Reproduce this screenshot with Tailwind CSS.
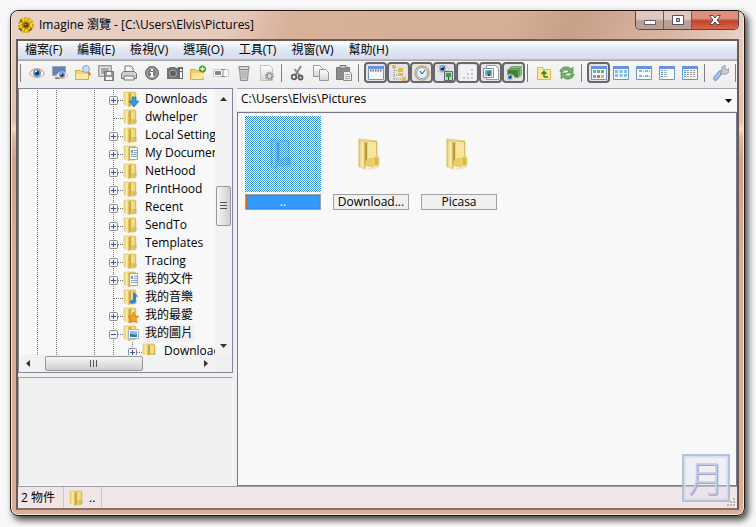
<!DOCTYPE html>
<html lang="zh-Hant">
  <head>
    <meta charset="UTF-8" />
    <meta name="viewport" content="width=device-width, initial-scale=1.0" />
    <title>Imagine 瀏覽</title>
    <!-- Tailwind CDN -->
    <script src="https://cdn.jsdelivr.net/npm/@tailwindcss/browser@4"></script>
  </head>
  <body class="flex h-screen flex-col overflow-hidden bg-[#f8f8f8] pt-[10px] pr-[11px] pb-[11px] pl-[10px] font-['Open_Sans','Noto_Sans_CJK_TC',sans-serif] text-xs text-black">
    <!-- Shared icons -->
    <svg class="absolute size-0">
      <defs>
        <linearGradient id="gold" x1="0" x2="1">
          <stop offset="0" stop-color="#f6e7a0" />
          <stop offset="0.5" stop-color="#ecd478" />
          <stop offset="1" stop-color="#dcb23c" />
        </linearGradient>
        <linearGradient id="flap" x1="0" x2="1">
          <stop offset="0" stop-color="#e6c866" />
          <stop offset="0.6" stop-color="#fbf2bc" />
          <stop offset="1" stop-color="#d8b34c" />
        </linearGradient>
        <linearGradient id="page" x2="0" y2="1">
          <stop offset="0" stop-color="#fff" />
          <stop offset="1" stop-color="#d4d4d4" />
        </linearGradient>
      </defs>
      <symbol id="folder" viewBox="0 0 16 16">
        <path d="M1 1h11l1 1v12l-1 1H5L1 13z" fill="url(#gold)" stroke="#dfc36a" stroke-width=".6" />
        <path d="M1 1l5 1.500V16L1 14z" fill="url(#flap)" />
        <path d="M6 2.500L8 1v13l-2 2z" fill="#cfa93c" />
        <path d="M8 2h4v8H8z" fill="#f0dc86" />
        <path d="M12 10h1.500v4H12z" fill="#9ec3dc" />
      </symbol>
      <symbol id="folder-open" viewBox="0 0 24 32">
        <path d="M16 27l8 1-6 3-9 1z" fill="#e4e4e2" />
        <path d="M2 1l18 2v25H8L2 29z" fill="url(#gold)" stroke="#e4cc7c" stroke-width=".8" />
        <path d="M11 4h8v16h-8z" fill="#f6e6a2" />
        <path d="M8 5l2-1v18l-2 6z" fill="#b98f2c" />
        <path d="M2 1l6 4v26l-6-3z" fill="url(#flap)" stroke="#dcc06a" stroke-width=".8" />
        <path d="M9 22c3 0 5-1 7-3l6 1v7c-5 2-9 2-14 1z" fill="#e9cc66" />
        <path d="M17 19h5v8l-5 1z" fill="#dfb93c" stroke="#efdc91" />
      </symbol>
      <symbol id="eye" viewBox="0 0 16 16">
        <path d="M.5 8.500C4 2 12 2 15.500 8.500 12 14 4 14 .5 8.500z" fill="#fbf3ee" stroke="#dcae90" stroke-width="1.200" />
        <circle cx="8" cy="8" r="4" fill="#5c94d0" />
        <circle cx="8" cy="8" r="2" fill="#10284c" />
        <circle cx="7" cy="6.500" r="1" fill="#fff" />
      </symbol>
      <symbol id="win" viewBox="0 0 16 16">
        <path d="M.5 1.500h15v13H.5z" fill="#f6f8fb" stroke="#7392c8" />
        <path d="M0 1h16v3H0z" fill="#6a94da" />
      </symbol>
    </svg>

    <div class="flex min-h-0 flex-1 flex-col rounded-lg border border-[#241812] bg-[linear-gradient(#e6cfc4_0,#dfc0b0_110px,#f0dcb8_118px,#dbb9a5_126px,#d0a38a_150px,#d9af98_260px,#d9af98_100%)] px-[5px] pb-[5px] shadow-[3px_4px_7px_rgba(0,0,0,0.75)] inset-ring inset-ring-[#f7e5db]">
      <!-- Title bar -->
      <header class="-mx-1 flex h-7 shrink-0 items-start justify-between rounded-t-md bg-[linear-gradient(115deg,#e9d2c7_0%,#e6cabc_30%,#d8b199_38%,#d6ad95_68%,#c89f87_76%,#d2ab95_83%,#d9b5a2_90%,#e7d0c5_100%)] pr-1 pl-[6px]">
        <h1 class="flex h-full items-center gap-[5px]">
          <svg class="size-4" viewBox="0 0 16 16">
            <circle cx="8" cy="8" r="6.500" fill="none" stroke="#dba800" stroke-width="3" stroke-dasharray="2.500 1" />
            <circle cx="8" cy="8" r="5.500" fill="#c48c00" />
            <circle cx="8" cy="8" r="5" fill="none" stroke="#f4d820" stroke-width="2" stroke-dasharray="2 1.200" />
            <circle cx="8" cy="8" r="2.500" fill="#5a3c08" />
            <circle cx="7.500" cy="7.500" r="1" fill="#a8b030" />
            <path d="M1 11l3 3M11 14l3-3M2 3l2 2" stroke="#6c5410" stroke-width="1.500" />
          </svg>
          Imagine 瀏覽 - [C:\Users\Elvis\Pictures]
        </h1>
        <div class="flex h-[19px] overflow-hidden rounded-b-[5px] border border-t-0 border-[#584840]">
          <button aria-label="最小化" class="flex w-7 items-center justify-center border-r border-[#705c54] bg-linear-to-b from-[#dcc9c0] from-45% to-[#b9a096] to-55%">
            <svg class="mt-1 h-[6px] w-3" viewBox="0 0 12 6"><path d="M.5 1.500h11v4H.5z" fill="#fff" stroke="#625e68" /></svg>
          </button>
          <button aria-label="最大化" class="flex w-7 items-center justify-center border-r border-[#705c54] bg-linear-to-b from-[#dcc9c0] from-45% to-[#b9a096] to-55%">
            <svg class="h-[10px] w-3" viewBox="0 0 12 10"><path d="M.5.5h11v9H.5zM4.500 3.500v3h3v-3z" fill="#fff" fill-rule="evenodd" stroke="#55525c" /></svg>
          </button>
          <button aria-label="關閉" class="flex w-[46px] items-center justify-center bg-linear-to-b from-[#dd9080] from-40% via-[#c2402a] via-55% to-[#d8684a]">
            <svg class="h-[10px] w-3" viewBox="0 0 12 10"><path d="M.5.5h3.500L6 3 8 .5h3.500L8 5l3.500 4.500H8L6 7 4 9.500H.5L4 5z" fill="#fff" stroke="#5c4850" /></svg>
          </button>
        </div>
      </header>

      <div class="flex min-h-0 flex-1 flex-col border-2 border-[#6b5b55] border-b-[#8a7068] bg-[#f0f0f0]">
        <!-- Menu -->
        <nav class="flex h-[19px] shrink-0 items-center gap-[15px] border-b border-[#b4bac8] bg-linear-to-b from-white via-[#e2e9f2] via-45% to-[#d6dcee] px-[7px] whitespace-nowrap">
          <button>檔案(F)</button>
          <button>編輯(E)</button>
          <button>檢視(V)</button>
          <button>選項(O)</button>
          <button>工具(T)</button>
          <button>視窗(W)</button>
          <button>幫助(H)</button>
        </nav>

        <!-- Toolbar, filled by the script below -->
        <div id="toolbar" role="toolbar" class="flex h-[28px] shrink-0 items-center overflow-hidden border-t border-[#a8a8a8] bg-linear-to-b from-[#f6f6f6] to-[#ededed] pb-1"></div>

        <main class="flex min-h-0 flex-1 gap-1">
          <div class="flex w-[215px] shrink-0 flex-col gap-1">
            <!-- Folder tree -->
            <section class="grid h-[285px] shrink-0 grid-cols-[1fr_17px] grid-rows-[1fr_17px] border border-[#85859a] bg-[#f8f8f8]">
              <ul id="tree" class="min-h-0 overflow-hidden pt-px whitespace-nowrap"></ul>
              <div class="flex min-h-0 flex-col items-center bg-[#f2f2f2]">
                <svg class="mt-2 h-1 w-[7px]" viewBox="0 0 7 4"><path d="M0 4h7L3.500 0z" fill="#333" /></svg>
                <div class="mt-[85px] flex h-10 w-[15px] items-center justify-center rounded-xs border border-[#989898] bg-linear-to-r from-[#f6f6f6] to-[#cfcfcf]">
                  <svg class="h-2 w-[7px]" viewBox="0 0 7 8"><path d="M0 .5h7M0 3.500h7M0 6.500h7" stroke="#555" /></svg>
                </div>
                <svg class="mt-auto mb-[7px] h-1 w-[7px]" viewBox="0 0 7 4"><path d="M0 0h7L3.500 4z" fill="#333" /></svg>
              </div>
              <div class="flex items-center bg-[#f2f2f2] pb-px pl-[7px]">
                <svg class="h-[7px] w-1" viewBox="0 0 4 7"><path d="M4 0v7L0 3.500z" fill="#333" /></svg>
                <div class="ml-[15px] flex h-[15px] w-[98px] items-center justify-center rounded-xs border border-[#989898] bg-linear-to-b from-[#f6f6f6] to-[#cfcfcf]">
                  <svg class="h-[7px] w-2" viewBox="0 0 8 7"><path d="M.5 0v7M3.500 0v7M6.500 0v7" stroke="#555" /></svg>
                </div>
                <svg class="mr-[7px] ml-auto h-[7px] w-1" viewBox="0 0 4 7"><path d="M0 0v7l4-3.500z" fill="#333" /></svg>
              </div>
              <div class="bg-[#f0f0f0]"></div>
            </section>
            <!-- Preview -->
            <section class="flex-1 border border-t-[#a0a0a0] border-r-[#f8f8f8] border-b-[#f8f8f8] border-l-[#a0a0a0]"></section>
          </div>

          <div class="flex min-w-0 flex-1 flex-col">
            <div class="relative h-6 shrink-0 border-t border-b border-t-[#a4a4b4] border-b-[#e4e4e8] bg-[#f8f8f8]">
              <select aria-label="路徑" class="h-full w-full appearance-none bg-transparent px-1 pb-[2px]">
                <option>C:\Users\Elvis\Pictures</option>
              </select>
              <svg class="pointer-events-none absolute top-[10px] right-[5px] h-1 w-[7px]" viewBox="0 0 7 4"><path d="M0 0h7L3.500 4z" /></svg>
            </div>
            <ul class="flex flex-1 flex-wrap content-start gap-3 border border-[#78788a] bg-[#f8f8f8] px-[7px] py-[3px]">
              <li class="flex w-[76px] flex-col gap-[2px]">
                <div class="relative flex h-[76px] items-center justify-center">
                  <svg class="mr-1 h-8 w-6"><use href="#folder-open" /></svg>
                  <!-- dithered selection -->
                  <div class="absolute inset-0 bg-[conic-gradient(#3a8ee0_25%,transparent_0_50%,#3a8ee0_0_75%,transparent_0)] bg-size-[2px_2px]"></div>
                </div>
                <span class="h-4 border border-[#a0a0a0] bg-[#3399ff] text-center leading-[14px] text-white outline-1 -outline-offset-2 outline-dotted outline-[#c86414]">..</span>
              </li>
              <li class="flex w-[76px] flex-col gap-[2px]">
                <div class="flex h-[76px] items-center justify-center"><svg class="mr-1 h-8 w-6"><use href="#folder-open" /></svg></div>
                <span class="h-4 border border-[#a0a0a0] bg-[#f0f0f0] text-center leading-[14px]">Download...</span>
              </li>
              <li class="flex w-[76px] flex-col gap-[2px]">
                <div class="flex h-[76px] items-center justify-center"><svg class="mr-1 h-8 w-6"><use href="#folder-open" /></svg></div>
                <span class="h-4 border border-[#a0a0a0] bg-[#f0f0f0] text-center leading-[14px]">Picasa</span>
              </li>
            </ul>
          </div>
        </main>

        <!-- Status bar -->
        <footer class="relative flex h-[22px] shrink-0 items-center border-t border-[#a09ca0] bg-[#f0e6e6]">
          <span class="flex h-full w-[46px] items-center border-r border-[#cdc6c6] pl-[3px]">2 物件</span>
          <span class="flex h-full w-[38px] items-center gap-1 border-r border-[#cdc6c6] pl-[5px]">
            <svg class="size-4"><use href="#folder" /></svg>..
          </span>
          <svg class="mt-auto ml-auto size-3" viewBox="0 0 12 12"><path d="M8 2h2v2H8zM5 5h2v2H5zM8 5h2v2H8zM2 8h2v2H2zM5 8h2v2H5zM8 8h2v2H8z" fill="#bcb4b6" /></svg>
          <div class="absolute right-[7px] bottom-[6px] flex size-12 items-center justify-center border-2 border-[#aab4d6]/80 bg-[#dfe4f2]/40 pb-1 font-['Noto_Sans_CJK_TC',sans-serif] text-4xl font-light text-[#c9c9ea] inset-ring-2 inset-ring-[#d0daea]/70 text-shadow-[1px_1px_0_#a4a4bc]">月</div>
        </footer>
      </div>
    </div>

    <script>
      const icons = {
        eye: `<use href="#eye" />`,
        screen: `<path d="M.5 1.500h13v9H.5z" fill="#5a86c4" stroke="#a0a4ac" /><path d="M3 13h6" stroke="#888" stroke-width="2" /><svg x="4" y="4" width="12" height="12"><use href="#eye" /></svg>`,
        browse: `<path d="M.5 5.500h5l1 1h7v8H.5z" fill="#f6d468" stroke="#dca848" /><path d="M1 9h12v5H1z" fill="#fbe9a4" /><circle cx="11" cy="4" r="3.500" fill="#c4e2f6" stroke="#86a8c8" /><path d="M13 7l2.500 3" stroke="#c88430" stroke-width="2" />`,
        save: `<path d="M.5.5h13v11H.5z" fill="#c4c4c4" stroke="#999" /><path d="M2.500 2.500h9v7h-9z" fill="#a8a8a8" stroke="#e4e4e4" /><path d="M6.500 6.500h9v9h-9z" fill="#969696" stroke="#777" /><path d="M9 7h4v3H9zM8 12h6v3H8z" fill="#f4f4f4" />`,
        print: `<path d="M4 7V1h6l2 2v4" fill="#f4f4f4" stroke="#777" /><path d="M.5 8.500l2-2h11l2 2v5H.5z" fill="#d0d0d0" stroke="#777" /><path d="M3 11h10v4H3z" fill="#f0f0f0" stroke="#777" />`,
        info: `<circle cx="8" cy="8" r="6.500" fill="#808080" stroke="#6a6a6a" /><circle cx="8" cy="8" r="5" fill="none" stroke="#b0b0b0" /><path d="M7 4h2v2H7zM6 7h3v4h1v1H6v-1h1V8H6z" fill="#fff" />`,
        camera: `<path d="M0 3h2l1-1h5l1 1h2v11H0z" fill="#747474" /><circle cx="6" cy="8.500" r="3.500" fill="#606060" stroke="#a8a8a8" /><path d="M11 2h5v12h-5z" fill="#6a6a6a" /><path d="M13 4h2v2h-2zM13 7h2v6h-2z" fill="#fff" />`,
        addfolder: `<path d="M.5 4.500h5l1 1h7v9H.5z" fill="#f3cf65" stroke="#dcaa40" /><path d="M3 8h12l-2 6H1z" fill="#fbe898" /><circle cx="12.500" cy="4" r="3.500" fill="#43a32c" /><path d="M12.500 2v4M10.500 4h4" stroke="#fff" stroke-width="1.300" />`,
        rename: `<path d="M.5 4.500h15v7H.5z" fill="#fafafa" stroke="#ccc" /><path d="M2 6h6v4H2z" fill="#888" /><path d="M8 4.500h4M8 11.500h4M10 5v6" stroke="#8a8a8a" />`,
        trash: `<path d="M3.500 3.500h9l-1 12h-7z" fill="#cdcdcd" stroke="#8c8c8c" /><path d="M3 1.500h10v3H3z" fill="#d8d8d8" stroke="#858585" /><path d="M6 6v8M8 6v8M10 6v8" stroke="#aaa" />`,
        prefs: `<path d="M1.500.5h9l3 3v12h-12z" fill="url(#page)" stroke="#c2c2c2" /><circle cx="10.500" cy="11" r="3.500" fill="#ccc" stroke="#999" stroke-width="2" stroke-dasharray="1.600 1.100" /><circle cx="10.500" cy="11" r="2.500" fill="#ddd" stroke="#888" />`,
        cut: `<path d="M11 1L5.500 10M4.500 4l5.500 7" stroke="#8a8a8a" stroke-width="2" /><circle cx="4" cy="12" r="2.300" stroke="#5c5c5c" stroke-width="1.800" /><circle cx="10.500" cy="12.500" r="2" stroke="#5c5c5c" stroke-width="1.800" />`,
        copy: `<path d="M.5.5h6l3 3v8h-9z" fill="url(#page)" stroke="#999" /><path d="M6.500 4.500h6l3 3v8h-9z" fill="url(#page)" stroke="#999" />`,
        paste: `<path d="M.5 2.500h13v12H.5z" fill="#8c8c8c" stroke="#777" /><path d="M4 .5h6v3H4z" fill="#c4c4c4" stroke="#777" /><path d="M7.500 6.500h6l2 2v7h-8z" fill="#eee" stroke="#888" /><path d="M9 9.500h5M9 11.500h5M9 13.500h5" stroke="#aaa" />`,
        toolbars: `<use href="#win" /><path d="M2 5.500h12" stroke="#667" stroke-width="2" stroke-dasharray="1.500 1" />`,
        tree: `<path d="M3 1v13M3 5.500h5M3 10h5M3 14h8" stroke="#888" stroke-dasharray="1 1" /><path d="M1 0h4v3H1zM7 3h5v4H7zM7 8h5v3H7zM11 12h4v4h-4z" fill="#ecb844" />`,
        clock: `<circle cx="8" cy="8" r="7" fill="#e4f0fa" stroke="#c8a86c" stroke-width="1.500" /><circle cx="8" cy="8" r="5.500" stroke="#8ca4c0" /><path d="M8 9l3-4M8 9L6 6" stroke="#345" />`,
        preview: `<svg x="-1" y="-3" width="13" height="13"><use href="#eye" /></svg><path d="M7.500 6.500h8v9h-8z" fill="#a8d4f4" stroke="#667" /><path d="M9 8h5v4H9z" fill="#3c9c30" /><path d="M11 12h1v3h-1z" fill="#245c20" />`,
        grid: `<path d="M0 0h16v16H0z" fill="#f2f2f6" /><path d="M11 4h2v2h-2zM7 8h2v2H7zM11 8h2v2h-2zM3 12h2v2H3zM7 12h2v2H7zM11 12h2v2h-2z" fill="#c6c6d6" />`,
        photo: `<path d="M3.500.5h9l3 3v11h-12z" fill="#fff" stroke="#999" /><path d="M.5 3.500h10v9H.5z" fill="#fafafa" stroke="#8a8a9a" /><path d="M2 5h7v6H2z" fill="#70acec" /><path d="M4 6h4v3H4z" fill="#3c9c30" /><path d="M5 9h2v2H5z" fill="#245c20" />`,
        slides: `<path d="M5 1h11v9H5z" fill="#72ae6a" /><path d="M3.500 2.500h11v9h-11z" fill="#58964e" stroke="#86bc80" /><path d="M1.500 4.500h11v8h-11z" fill="#3f8236" stroke="#78ac70" /><svg x="-1" y="7" width="10" height="10"><use href="#eye" /></svg>`,
        up: `<path d="M1.500 2.500h5l1 2h7v10h-13z" fill="#fbe896" stroke="#e0b850" /><path d="M8 12V7M5.500 9L8 6.500 10.500 9M8 12h4" stroke="#348420" stroke-width="1.600" />`,
        refresh: `<path d="M1 7c0-5 8-7 11-3l2-2v6H8l2-2C8 4 4 5 4 7z" fill="#72b468" stroke="#4f8e48" stroke-width=".7" /><path d="M15 9c0 5-8 7-11 3l-2 2V8h6l-2 2c2 2 6 1 6-1z" fill="#72b468" stroke="#4f8e48" stroke-width=".7" />`,
        thumbs: `<use href="#win" /><path d="M2 5h3v3H2zM2 10h3v3H2z" fill="#5cb0e0" /><path d="M6 5h3v3H6zM10 5h3v3h-3z" fill="#68b45c" /><path d="M6 10h3v3H6z" fill="#e06848" /><path d="M10 10h3v3h-3z" fill="#eab040" />`,
        tiles: `<use href="#win" /><path d="M2 5h3v3H2zM6.500 5h3v3h-3zM11 5h3v3h-3zM2 9h3v3H2zM6.500 9h3v3h-3zM11 9h3v3h-3z" fill="#80bfe8" />`,
        small: `<use href="#win" /><path d="M3 5h3v2H3zM9 5h3v2H9zM3 10h3v2H3zM9 10h3v2H9z" fill="#74b8e4" /><path d="M7 6.500h1M13 6.500h1M7 11.500h1M13 11.500h1" stroke="#999" />`,
        list: `<use href="#win" /><path d="M2 5.500h2M2 7.500h2M2 9.500h2M2 11.500h2" stroke="#3c94e0" /><path d="M5 5.500h3M5 7.500h3M5 9.500h3M5 11.500h3" stroke="#aaa" />`,
        details: `<use href="#win" /><path d="M2 5.500h2M2 7.500h2M2 9.500h2M2 11.500h2" stroke="#3c94e0" /><path d="M5 5.500h9M5 7.500h9M5 9.500h9M5 11.500h9" stroke="#999" stroke-dasharray="2 1" />`,
        wrench: `<path d="M2.500 13.500l5-6" stroke="#6c98d0" stroke-width="4.500" stroke-linecap="round" /><path d="M2.500 13.500l5-6" stroke="#a8cbee" stroke-width="2.500" stroke-linecap="round" /><path d="M7 8l2-2V2l3-2v4l3 1 1-2v4l-3 2H9z" fill="#ccc" stroke="#8c8c8c" stroke-width=".8" />`,
      };

      // "|" is a separator, "*" marks a pressed button
      const toolbar =
        "| eye screen browse save print info camera addfolder rename trash prefs | cut copy paste | *toolbars *tree *clock *preview *grid *photo *slides | up refresh | *thumbs tiles small list details | wrench |";

      document.getElementById("toolbar").innerHTML = toolbar
        .split(" ")
        .map((item) => {
          if (item === "|") {
            return `<span class="h-[18px] w-2 shrink-0 pl-[2px]"><span class="block h-full w-px bg-[#808080]"></span></span>`;
          }
          const pressed = item[0] === "*";
          const name = item.replace("*", "");
          const look = pressed
            ? "flex h-[21px] w-[23px] shrink-0 items-center justify-center rounded-[4px] border-2 border-[#67676b] bg-[#e4e4e6]"
            : "flex h-[21px] w-[23px] shrink-0 items-center justify-center pr-px";
          return `<button aria-label="${name}" aria-pressed="${pressed}" class="${look}"><svg class="size-4 shrink-0" viewBox="0 0 16 16" fill="none">${icons[name]}</svg></button>`;
        })
        .join("");

      const badges = {
        down: `<path d="M9 6h4v4h3l-5 6-5-6h3z" fill="#2f9be8" stroke="#1a6cb8" stroke-width=".6" />`,
        doc: `<path d="M6.500 2.500h8v12h-8z" fill="#fafafa" stroke="#a4a4a4" /><path d="M8 5h2v3H8z" fill="#4aa0e0" /><path d="M11 5.500h3M11 7.500h3M8 9.500h6M8 11.500h6" stroke="#98a4b0" />`,
        music: `<path d="M10 2c1 3 5 3 5 7l-2-2v5c0 3-6 4-6 1 0-2 2-2 3-2z" fill="#2a86d4" />`,
        star: `<path d="M10.500 5l1.500 4 4 .3-3 2.500 1 4.200-3.500-2L7 16l1-4.200-3-2.500 4-.3z" fill="#f4a428" stroke="#cc6c10" stroke-width=".6" />`,
        picture: `<path d="M5.500 4.500h10v9h-10z" fill="#fff" stroke="#a8b4c0" /><path d="M7 6h7v6H7z" fill="#8cc4e8" /><path d="M7 9c3-1 4 2 7 0v3H7z" fill="#3c7ca4" />`,
      };

      // [name, node, badge]
      const folders = [
        ["Downloads", "+", "down"],
        ["dwhelper", ""],
        ["Local Settings", "+"],
        ["My Documents", "+", "doc"],
        ["NetHood", "+"],
        ["PrintHood", "+"],
        ["Recent", "+"],
        ["SendTo", "+"],
        ["Templates", "+"],
        ["Tracing", "+"],
        ["我的文件", "+", "doc"],
        ["我的音樂", "", "music"],
        ["我的最愛", "+", "star"],
        ["我的圖片", "-", "picture"],
        ["Downloads", "+", "", true],
      ];

      function cell(content) {
        return `<svg class="h-[18px] w-[19px] shrink-0" viewBox="0 0 19 18" fill="none">${content}</svg>`;
      }

      const dots = `<path d="M9.500 0v18" stroke="#777" stroke-dasharray="1 1" />`;

      function node(sign) {
        const dash = `<path d="M10 10.500h9" stroke="#777" stroke-dasharray="1 1" />`;
        if (!sign) return cell(dots + dash);
        const vertical = sign === "+" ? "M9.500 8v5" : "";
        return cell(
          `${dots}${dash}<rect x="5.500" y="6.500" width="8" height="8" rx="1" fill="#f4f4f4" stroke="#8e8e8e" /><path d="M7 10.500h5${vertical}" stroke="#3a56a0" />`
        );
      }

      document.getElementById("tree").innerHTML = folders
        .map(([name, sign, badge, child]) => {
          const lines = cell(dots) + cell(dots) + cell("") + cell(dots) + (child ? cell(dots) : "");
          const label =
            sign === "-"
              ? "ml-1 bg-[#f0f0f0] px-[2px] leading-[18px]"
              : "ml-1 px-[2px] leading-[18px]";
          return `<li class="flex h-[18px] items-center pl-[9px]">${lines}${node(sign)}<svg class="size-4 shrink-0" viewBox="0 0 16 16" fill="none"><use href="#folder" />${badges[badge] || ""}</svg><span class="${label}">${name}</span></li>`;
        })
        .join("");
    </script>
  </body>
</html>
